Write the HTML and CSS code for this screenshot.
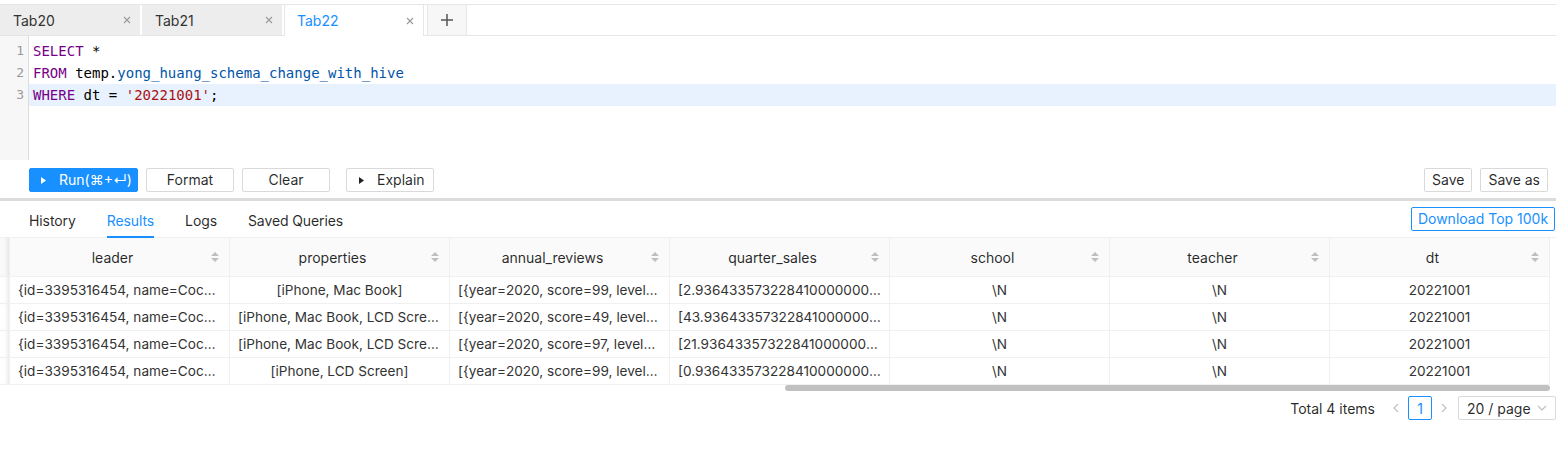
FILE: index.html
```html
<!DOCTYPE html>
<html>
<head>
<meta charset="utf-8">
<link rel="stylesheet" href="styles.css">
</head>
<body>
<div class="app">
  <div class="tabbar">
    <div class="tab">Tab20<svg class="close" viewBox="0 0 8 8"><path d="M1 1L7 7M7 1L1 7"/></svg></div>
    <div class="tab">Tab21<svg class="close" viewBox="0 0 8 8"><path d="M1 1L7 7M7 1L1 7"/></svg></div>
    <div class="tab active">Tab22<svg class="close" viewBox="0 0 8 8"><path d="M1 1L7 7M7 1L1 7"/></svg></div>
    <div class="add"><svg viewBox="0 0 12 12"><path d="M6 0V12M0 6H12"/></svg></div>
  </div>

  <div class="editor">
    <div class="gutter">
      <div class="ln">1</div>
      <div class="ln">2</div>
      <div class="ln">3</div>
    </div>
    <div class="code">
      <div class="line"><span class="kw">SELECT</span> *</div>
      <div class="line"><span class="kw">FROM</span> temp.<span class="var">yong_huang_schema_change_with_hive</span></div>
      <div class="line current"><span class="kw">WHERE</span> dt = <span class="str">'20221001'</span>;</div>
    </div>
  </div>

  <div class="toolbar">
    <div class="group">
      <button class="btn primary run"><svg class="play" viewBox="0 0 5 7"><path d="M0 0L5 3.5L0 7Z"/></svg>Run(⌘+↵)</button>
      <button class="btn wide">Format</button>
      <button class="btn wide">Clear</button>
      <button class="btn wide explain"><svg class="play dark" viewBox="0 0 5 7"><path d="M0 0L5 3.5L0 7Z"/></svg>Explain</button>
    </div>
    <div class="group right">
      <button class="btn">Save</button>
      <button class="btn">Save as</button>
    </div>
  </div>
  <div class="separator"></div>

  <div class="rtabs">
    <div class="rtab">History</div>
    <div class="rtab active">Results</div>
    <div class="rtab">Logs</div>
    <div class="rtab">Saved Queries</div>
    <button class="btn outline download">Download Top 100k</button>
  </div>

  <div class="table">
    <div class="row head">
      <div class="fix"></div>
      <div class="cell">leader<span class="sorter"><i class="up"></i><i class="down"></i></span></div>
      <div class="cell">properties<span class="sorter"><i class="up"></i><i class="down"></i></span></div>
      <div class="cell">annual_reviews<span class="sorter"><i class="up"></i><i class="down"></i></span></div>
      <div class="cell">quarter_sales<span class="sorter"><i class="up"></i><i class="down"></i></span></div>
      <div class="cell">school<span class="sorter"><i class="up"></i><i class="down"></i></span></div>
      <div class="cell">teacher<span class="sorter"><i class="up"></i><i class="down"></i></span></div>
      <div class="cell">dt<span class="sorter"><i class="up"></i><i class="down"></i></span></div>
    </div>
    <div class="row">
      <div class="fix"></div>
      <div class="cell"><span class="txt">{id=3395316454, name=Coco, age=18}</span></div>
      <div class="cell"><span class="txt">[iPhone, Mac Book]</span></div>
      <div class="cell"><span class="txt">[{year=2020, score=99, level=A}]</span></div>
      <div class="cell"><span class="txt">[2.936433573228410000000000000000]</span></div>
      <div class="cell"><span class="txt">\N</span></div>
      <div class="cell"><span class="txt">\N</span></div>
      <div class="cell"><span class="txt">20221001</span></div>
    </div>
    <div class="row">
      <div class="fix"></div>
      <div class="cell"><span class="txt">{id=3395316454, name=Coco, age=18}</span></div>
      <div class="cell"><span class="txt">[iPhone, Mac Book, LCD Screen]</span></div>
      <div class="cell"><span class="txt">[{year=2020, score=49, level=C}]</span></div>
      <div class="cell"><span class="txt">[43.93643357322841000000000000000]</span></div>
      <div class="cell"><span class="txt">\N</span></div>
      <div class="cell"><span class="txt">\N</span></div>
      <div class="cell"><span class="txt">20221001</span></div>
    </div>
    <div class="row">
      <div class="fix"></div>
      <div class="cell"><span class="txt">{id=3395316454, name=Coco, age=18}</span></div>
      <div class="cell"><span class="txt">[iPhone, Mac Book, LCD Screen]</span></div>
      <div class="cell"><span class="txt">[{year=2020, score=97, level=A}]</span></div>
      <div class="cell"><span class="txt">[21.93643357322841000000000000000]</span></div>
      <div class="cell"><span class="txt">\N</span></div>
      <div class="cell"><span class="txt">\N</span></div>
      <div class="cell"><span class="txt">20221001</span></div>
    </div>
    <div class="row">
      <div class="fix"></div>
      <div class="cell"><span class="txt">{id=3395316454, name=Coco, age=18}</span></div>
      <div class="cell"><span class="txt">[iPhone, LCD Screen]</span></div>
      <div class="cell"><span class="txt">[{year=2020, score=99, level=A}]</span></div>
      <div class="cell"><span class="txt">[0.936433573228410000000000000000]</span></div>
      <div class="cell"><span class="txt">\N</span></div>
      <div class="cell"><span class="txt">\N</span></div>
      <div class="cell"><span class="txt">20221001</span></div>
    </div>
    <div class="hscroll"><div class="thumb"></div></div>
  </div>

  <div class="pagination">
    <span class="total">Total 4 items</span>
    <span class="pager"><svg viewBox="0 0 6 10"><path d="M5 1L1 5L5 9"/></svg></span>
    <span class="page current">1</span>
    <span class="pager"><svg viewBox="0 0 6 10"><path d="M1 1L5 5L1 9"/></svg></span>
    <span class="select">20 / page<svg viewBox="0 0 10 6"><path d="M1 1L5 5L9 1"/></svg></span>
  </div>
</div>
</body>
</html>
```
FILE: styles.css
```css
* { box-sizing: border-box; }
html, body { margin: 0; background: #fff; }
body {
  font-family: Inter, "Noto Sans", "Liberation Sans", sans-serif;
  font-size: 14px;
  color: rgba(0, 0, 0, 0.85);
}
.app { width: 1556px; padding-top: 4px; }

/* top tabs */
.tabbar {
  display: flex;
  height: 32px;
  border-top: 1px solid #e6e6e6;
  border-bottom: 1px solid #e6e6e6;
}
.tab {
  width: 140px;
  margin-right: 2px;
  background: #ededed;
  display: flex;
  align-items: center;
  justify-content: space-between;
  padding: 0 9px 0 13px;
  color: #333;
  font-size: 14px;
}
.tab.active {
  background: #fff;
  color: #1890ff;
  border-left: 1px solid #e6e6e6;
  border-right: 1px solid #e6e6e6;
  height: 31px;
  width: 140px;
  padding-left: 12px;
}
.close { width: 8px; height: 8px; }
.close path { stroke: #999; stroke-width: 1.1; fill: none; }
.add {
  width: 40px;
  margin-left: 1px;
  background: #f7f7f7;
  border-left: 1px solid #e6e6e6;
  border-right: 1px solid #e6e6e6;
  display: flex;
  align-items: center;
  justify-content: center;
}
.add svg { width: 12px; height: 12px; }
.add path { stroke: #555; stroke-width: 1.5; fill: none; }

/* editor */
.editor {
  display: flex;
  height: 124px;
  font-family: "DejaVu Sans Mono", "Liberation Mono", monospace;
  font-size: 14px;
}
.gutter {
  width: 29px;
  background: #f7f7f7;
  border-right: 1px solid #ddd;
  padding-top: 4px;
  color: #999;
  text-align: right;
  padding-right: 4px;
  font-size: 13px;
}
.ln { height: 22px; line-height: 22px; }
.code { flex: 1; padding-top: 4px; }
.line { height: 22px; line-height: 22px; padding-left: 4px; color: #000; white-space: pre; }
.line.current { background: #e8f2ff; }
.kw { color: #770088; }
.var { color: #0055aa; }
.str { color: #aa1111; }

/* toolbar */
.toolbar {
  display: flex;
  justify-content: space-between;
  padding: 8px 8px 6px 29px;
}
.group { display: flex; gap: 8px; }
.btn {
  font-family: Inter, "Noto Sans", "Liberation Sans", sans-serif;
  font-size: 14px;
  height: 24px;
  padding: 0 7px;
  border: 1px solid #d9d9d9;
  border-radius: 2px;
  background: #fff;
  color: rgba(0, 0, 0, 0.85);
  display: inline-flex;
  align-items: center;
  justify-content: center;
  line-height: 1;
  white-space: nowrap;
}
.btn.primary { background: #1890ff; border-color: #1890ff; color: #fff; width: 109px; }
.btn.wide { width: 88px; }
.btn.explain { margin-left: 8px; }
.play { width: 5px; height: 7px; margin-right: 13px; flex: none; }
.play path { fill: #fff; }
.play.dark path { fill: #222; }
.run { justify-content: flex-start; padding-left: 11px; }
.explain { justify-content: flex-start; padding-left: 12px; }
.separator { height: 3px; background: #dcdcdc; }

/* result tabs */
.rtabs {
  display: flex;
  align-items: center;
  height: 37px;
  padding-left: 29px;
  border-bottom: 1px solid #f0f0f0;
}
.rtab {
  height: 37px;
  padding-top: 9px;
  line-height: 22px;
  margin-right: 31px;
  border-bottom: 2px solid transparent;
  color: rgba(0, 0, 0, 0.85);
  letter-spacing: -0.1px;
}
.rtab.active { color: #1890ff; border-bottom-color: #1890ff; }
.btn.outline {
  margin-left: auto;
  border-color: #1890ff;
  color: #1890ff;
  width: 144px;
  padding: 0;
  margin-right: 1px;
}

/* table */
.table { width: 1550px; }
.row { display: flex; height: 27px; border-bottom: 1px solid #f0f0f0; }
.row.head { height: 39px; background: #fafafa; }
.fix {
  width: 10px;
  flex: none;
  border-right: 1px solid #f0f0f0;
  box-shadow: inset -4px 0 5px -3px rgba(0, 0, 0, 0.12);
}
.cell {
  width: 220px;
  flex: none;
  border-right: 1px solid #f0f0f0;
  display: flex;
  align-items: center;
  justify-content: center;
  padding: 0 8px;
  position: relative;
  font-size: 13.6px;
  color: #333;
  min-width: 0;
}
.head .cell { font-size: 14px; color: rgba(0, 0, 0, 0.85); padding: 0 22px 0 8px; }
.txt { white-space: nowrap; overflow: hidden; text-overflow: ellipsis; min-width: 0; max-width: 100%; }
.sorter {
  position: absolute;
  right: 10px;
  top: 14px;
  display: flex;
  flex-direction: column;
  gap: 2px;
}
.sorter i { display: block; width: 0; height: 0; border-left: 4px solid transparent; border-right: 4px solid transparent; }
.sorter .up { border-bottom: 4px solid #bfbfbf; }
.sorter .down { border-top: 4px solid #bfbfbf; }
.hscroll { height: 6px; display: flex; }
.thumb { margin-left: 785px; width: 765px; height: 6px; background: #c1c1c1; border-radius: 3px; }

/* pagination */
.pagination {
  display: flex;
  justify-content: flex-end;
  align-items: center;
  margin-top: 5px;
  height: 24px;
}
.total { margin-right: 9px; }
.pager { width: 24px; height: 24px; display: flex; align-items: center; justify-content: center; }
.pager svg { width: 6px; height: 10px; }
.pager path { stroke: #bfbfbf; stroke-width: 1.2; fill: none; }
.page {
  width: 24px;
  height: 24px;
  border: 1px solid #1890ff;
  border-radius: 2px;
  color: #1890ff;
  display: flex;
  align-items: center;
  justify-content: center;
}
.select {
  margin-left: 2px;
  width: 98px;
  height: 24px;
  border: 1px solid #d9d9d9;
  border-radius: 2px;
  display: flex;
  align-items: center;
  justify-content: space-between;
  padding: 0 8px 0 8px;
}
.select svg { width: 10px; height: 6px; }
.select path { stroke: #bfbfbf; stroke-width: 1.2; fill: none; }
```
